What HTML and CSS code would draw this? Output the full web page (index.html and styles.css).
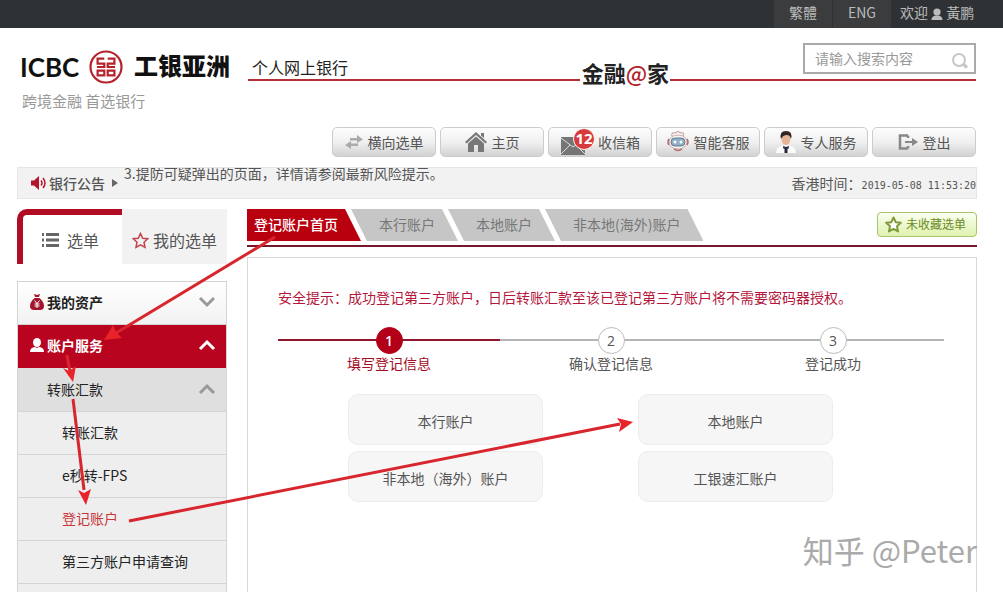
FILE: index.html
```html
<!DOCTYPE html>
<html lang="zh-CN">
<head>
<meta charset="utf-8">
<title>个人网上银行</title>
<link rel="stylesheet" href="styles.css">
</head>
<body>
<nav class="topbar">
  <a class="lang" href="#">繁體</a>
  <a class="lang" href="#">ENG</a>
  <span class="welcome">欢迎
    <svg width="12" height="12" viewBox="0 0 12 12"><circle cx="6" cy="4" r="3.6"/><path d="M0.5 12C0.5 9 3 7.6 6 7.6S11.500 9 11.500 12Z"/></svg>
    黃鹏</span>
</nav>

<header class="header">
  <div class="brand">
    <div class="logo">
      <span class="logo-en">ICBC</span>
      <svg width="34" height="34" viewBox="0 0 34 34" fill="none" stroke="#b5222c">
        <circle cx="17" cy="17" r="15.500" stroke-width="2.200"/>
        <path stroke-width="2.200" d="M15.300 8.600H8.600V13.600H15.300V17H8M18.700 8.600H25.400V13.600H18.700V17H26M15.300 25.400H8.600V20.600H15.300V26.500M18.700 25.400H25.400V20.600H18.700V26.500"/>
      </svg>
      <span class="logo-cn">工银亚洲</span>
    </div>
    <div class="slogan">跨境金融 首选银行</div>
  </div>
  <div class="headline">
    <div class="rule rule-title">个人网上银行</div>
    <div class="wordmark">金融<b>@</b>家</div>
    <form class="rule rule-search">
      <label class="search">
        <input type="text" placeholder="请输入搜索内容" aria-label="请输入搜索内容">
        <svg width="18" height="18" viewBox="0 0 18 18" fill="none" stroke="#c6c6c6"><circle cx="8" cy="8" r="6" stroke-width="2"/><path d="M12.500 12.500L16 15.500" stroke-width="3"/></svg>
      </label>
    </form>
  </div>
</header>

<div class="tools">
  <button class="tool"><svg width="18" height="14" viewBox="0 0 18 14" fill="#aaa"><path d="M5 3H12V0L18 4.500L12 8V5.500H5Z"/><path d="M13 8.500H6V6L0 10L6 14V11H13Z"/></svg>横向选单</button>
  <button class="tool"><svg width="22" height="20" viewBox="0 0 22 20" fill="#777"><path d="M11 0L22 10L20.500 11.500L11 3L1.500 11.500L0 10Z"/><path d="M16 1H19V6L16 3.500Z"/><path d="M3 11.500L11 4.500L19 11.500V20H13V13H9V20H3Z"/></svg>主页</button>
  <button class="tool mail"><svg width="36" height="28" viewBox="0 0 36 28"><path fill="#757575" d="M1 9H25V27H1Z"/><path fill="none" stroke="#ddd" d="M1 10L13 19L25 10M1 26L10 17M25 26L16 17"/><circle cx="24" cy="11" r="10.500" fill="#d93a3c" stroke="#f6f6f6"/><text class="mail-count" x="24" y="16">12</text></svg>收信箱</button>
  <button class="tool"><svg width="22" height="24" viewBox="0 0 22 24" fill="none"><path d="M5 6Q4 2 8 3Q11 0 14 3Q18 2 16 6" stroke="#b98f92"/><ellipse cx="11" cy="12" rx="9" ry="7" fill="#f6f6f6" stroke="#c9a9ab"/><rect x="4" y="8" width="14" height="8" rx="4" fill="#8fb0c6" stroke="#66788a"/><circle cx="8" cy="12" r="1.500" fill="#fff"/><circle cx="14" cy="12" r="1.500" fill="#fff"/><path d="M2 9Q0 12 2 15M20 9Q22 12 20 15M7 19Q11 22 15 19" stroke="#b6686d" stroke-width="1.500"/></svg>智能客服</button>
  <button class="tool"><svg width="20" height="22" viewBox="0 0 20 22"><path fill="#fafafa" d="M0 22Q0 16 6 15L10 14L14 15Q20 16 20 22Z"/><ellipse cx="10" cy="8" rx="4.500" ry="6" fill="#e6b497"/><path fill="#302524" d="M5 8Q3 0 10 0Q17 0 15 8Q14 4 11 4Q7 4 5 8Z"/><path fill="#28263e" d="M7 15L10 16L13 15L12.500 18L11.500 17.500V22H8.500V17.500L7.500 18Z"/></svg>专人服务</button>
  <button class="tool"><svg width="20" height="16" viewBox="0 0 20 16"><path d="M10 1.500H2V14.500H10M10 1.500V4M10 14.500V12" fill="none" stroke="#888" stroke-width="2.500"/><path fill="#888" d="M7 7H14V4L20 8L14 12V9H7Z"/></svg>登出</button>
</div>

<section class="notice">
  <div class="notice-title">
    <svg width="16" height="14" viewBox="0 0 16 14"><path fill="#b3162c" d="M0 4.500H3L8 0V14L3 9.500H0Z"/><path d="M10 4.500Q12 7 10 9.500M12 2Q16 7 12 12" fill="none" stroke="#b3162c" stroke-width="1.500"/></svg>
    银行公告
    <svg class="notice-arrow" width="6" height="8" viewBox="0 0 6 8"><path fill="#666" d="M0 0L6 4L0 8Z"/></svg>
  </div>
  <div class="notice-text">3.提防可疑弹出的页面，详情请参阅最新风险提示。</div>
  <div class="clock">香港时间：<time>2019-05-08 11:53:20</time></div>
</section>

<div class="columns">
  <aside class="sidebar">
    <div class="side-tabs">
      <button class="side-tab active"><svg width="17" height="14" viewBox="0 0 17 14" fill="#666"><path d="M0 0H2V3H0ZM4 0H17V3H4ZM0 5.500H2V8.500H0ZM4 5.500H17V8.500H4ZM0 11H2V14H0ZM4 11H17V14H4Z"/></svg>选单</button>
      <button class="side-tab"><svg width="17" height="17" viewBox="0 0 17 17" fill="none" stroke="#c0444a" stroke-width="1.500"><path d="M8.500 1.500L10.700 6.200L15.800 6.700L12 10.200L13 15.400L8.500 12.900L4 15.400L5 10.200L1.200 6.700L6.300 6.200Z"/></svg>我的选单</button>
    </div>
    <ul class="menu">
      <li><a class="group" href="#"><svg width="14" height="16" viewBox="0 0 14 16"><path fill="#a3142a" d="M4 0L7 1L10 0L9 3H5ZM4.500 4H9.500Q14 8 14 12Q14 16 10 16H4Q0 16 0 12Q0 8 4.500 4Z"/><path d="M4.500 6.500L7 9.500L9.500 6.500M7 9.500V14M4.500 10H9.500M4.500 12H9.500" fill="none" stroke="#fff"/></svg><span>我的资产</span><svg class="chevron" width="18" height="12" viewBox="0 0 18 12"><path d="M2 2L9 9L16 2"/></svg></a></li>
      <li><a class="group open" href="#"><svg width="14" height="14" viewBox="0 0 14 14" fill="#fff"><ellipse cx="7" cy="4.500" rx="4" ry="4.500"/><path d="M0 14Q0 9.500 5 9L7 10L9 9Q14 9.500 14 14Z"/></svg><span>账户服务</span><svg class="chevron" width="18" height="12" viewBox="0 0 18 12"><path d="M2 10L9 3L16 10"/></svg></a></li>
      <li><a class="sub" href="#"><span>转账汇款</span><svg class="chevron" width="18" height="12" viewBox="0 0 18 12"><path d="M2 10L9 3L16 10"/></svg></a></li>
      <li><a class="leaf" href="#">转账汇款</a></li>
      <li><a class="leaf" href="#">e秒转-FPS</a></li>
      <li><a class="leaf current" href="#">登记账户</a></li>
      <li><a class="leaf" href="#">第三方账户申请查询</a></li>
      <li class="rest"></li>
    </ul>
  </aside>

  <main class="main">
    <div class="tabbar">
      <nav class="tabs">
        <a class="tab selected" href="#">登记账户首页</a>
        <a class="tab" href="#">本行账户</a>
        <a class="tab" href="#">本地账户</a>
        <a class="tab" href="#">非本地(海外)账户</a>
      </nav>
      <button class="favorite"><svg width="17" height="17" viewBox="0 0 17 17" fill="#fff" stroke="#7f9c38" stroke-width="2"><path stroke-linejoin="round" d="M8.500 1.500L10.700 6.200L15.800 6.700L12 10.200L13 15.400L8.500 12.900L4 15.400L5 10.200L1.200 6.700L6.300 6.200Z"/></svg>未收藏选单</button>
    </div>
    <section class="panel">
      <p class="tip">安全提示：成功登记第三方账户，日后转账汇款至该已登记第三方账户将不需要密码器授权。</p>
      <ol class="steps">
        <li class="step done"><span class="dot">1</span>填写登记信息</li>
        <li class="step"><span class="dot">2</span>确认登记信息</li>
        <li class="step"><span class="dot">3</span>登记成功</li>
      </ol>
      <div class="choices">
        <button class="choice">本行账户</button>
        <button class="choice">本地账户</button>
        <button class="choice">非本地（海外）账户</button>
        <button class="choice">工银速汇账户</button>
      </div>
    </section>
  </main>
</div>

<svg class="arrows" width="1003" height="592" viewBox="0 0 1003 592" fill="none" stroke="#d8262e" stroke-width="3">
  <path d="M275 237L116 333M67 355L70 372M73 399L84 490M129 521L620 424"/>
  <g fill="#e8232a" stroke="none">
    <path d="M104 340L113 325L116 332L122 338Z"/>
    <path d="M73 382L63 368L69 371L76 366Z"/>
    <path d="M86 505L78 490L84 493L91 489Z"/>
    <path d="M633 422L617 418L621 424L619 432Z"/>
  </g>
</svg>
<div class="watermark">知乎 @Peter</div>
</body>
</html>
```

FILE: styles.css
```css
* { box-sizing: border-box; }
body {
  margin: 0;
  min-height: 100vh;
  display: flex;
  flex-direction: column;
  position: relative;
  overflow: hidden;
  background: #fff;
  color: #555;
  font: 14px/20px "Noto Sans CJK SC", "Noto Sans", sans-serif;
}
a { color: inherit; text-decoration: none; }
button { font: inherit; color: inherit; cursor: pointer; }
ul, ol { list-style: none; margin: 0; padding: 0; }
svg { flex: none; }

.topbar {
  display: flex;
  justify-content: flex-end;
  height: 28px;
  line-height: 25px;
  background: #2f3235;
  color: #bbb;
}
.lang {
  width: 59px;
  text-align: center;
  background: #3a3c3e;
  border-right: 1px solid #2f3235;
}
.welcome { width: 111px; padding-left: 8px; fill: #bbb; white-space: nowrap; }
.welcome svg { vertical-align: -2px; }

.header {
  display: flex;
  height: 99px;
  padding: 0 27px 0 17px;
}
.brand { width: 231px; flex: none; padding: 21px 0 0 3px; white-space: nowrap; }
.logo { display: flex; align-items: center; gap: 10px; height: 36px; color: #111; }
.logo-en { font: 700 26px/36px Lato, sans-serif; width: 59px; }
.logo-cn { font-size: 24px; line-height: 32px; padding: 0 0 4px 1px; font-weight: 900; }
.slogan { color: #999; font-size: 15px; padding: 6px 2px; }
.headline { flex: 1; display: flex; }
.rule { height: 53px; border-bottom: 2px solid #b3303a; }
.rule-title { flex: 331; padding: 29px 0 0 4px; font-size: 16px; color: #222; }
.wordmark {
  flex: none;
  width: 90px;
  padding-top: 28px;
  text-align: center;
  white-space: nowrap;
  font-size: 22px;
  line-height: 32px;
  font-weight: 700;
  color: #222;
}
.wordmark b { color: #b3202c; font-weight: 500; }
.rule-search { flex: 308; display: flex; justify-content: flex-end; padding-top: 15px; }
.search {
  display: flex;
  align-items: center;
  width: 173px;
  height: 31px;
  padding: 0 5px 2px 10px;
  border: 2px solid #aaa;
  background: #fff;
}
.search input { flex: 1; min-width: 0; border: 0; padding: 0; outline: 0; font: inherit; background: none; }
.search input::placeholder { color: #999; }
.search svg { align-self: flex-end; }

.tools { display: flex; justify-content: flex-end; gap: 4px; padding-right: 27px; }
.tool {
  display: flex;
  align-items: center;
  justify-content: center;
  gap: 5px;
  width: 104px;
  height: 30px;
  padding: 0 0 1px;
  border: 1px solid #ccc;
  border-radius: 5px;
  background: linear-gradient(#fdfdfd, #f0f0f0 50%, #d2d2d2);
}
.mail { gap: 2px; }
.mail-count { font: 700 15px "Open Sans", sans-serif; fill: #fff; text-anchor: middle; }

.notice {
  display: flex;
  height: 32px;
  margin: 10px 26px 0 17px;
  border: 1px solid #e6e6e6;
  background: #f2f2f2;
  overflow: hidden;
  white-space: nowrap;
}
.notice-title { display: flex; align-items: center; gap: 2px; width: 106px; padding-left: 13px; font-weight: 500; }
.notice-arrow { margin-left: 5px; }
.notice-text { flex: 1; line-height: 10px; }
.clock { line-height: 30px; }
.clock time { font: 10px "DejaVu Sans Mono", monospace; }

.columns { flex: 1; display: flex; gap: 20px; padding: 10px 26px 0 17px; }
.sidebar { width: 210px; flex: none; display: flex; flex-direction: column; }
.side-tabs { display: flex; height: 55px; margin-bottom: 17px; font-size: 16px; }
.side-tab {
  display: flex;
  align-items: center;
  justify-content: center;
  gap: 4px;
  flex: 1 1 0;
  padding: 7px 0 0;
  border: 0;
  background: #f2f2f2;
  white-space: nowrap;
}
.side-tab.active {
  flex: none;
  width: 105px;
  gap: 8px;
  padding: 1px 4px 0 0;
  border: solid #b00d24;
  border-width: 6px 0 0 6px;
  border-radius: 10px 0 0 0;
  background: #fff;
}
.menu { flex: 1; display: flex; flex-direction: column; border: solid #d4d4d4; border-width: 1px 1px 0; background: #eee; color: #222; }
.menu a { display: flex; align-items: center; height: 43px; padding-bottom: 2px; border-bottom: 1px solid #d4d4d4; }
.menu span { flex: 1; }
.menu .chevron { fill: none; stroke: #999; stroke-width: 3px; }
.menu .group { gap: 3px; padding: 0 10px 2px 12px; font-weight: 700; background: linear-gradient(#fff, #f2f2f2); }
.menu .open { background: #b9041f; color: #fff; border-color: #b9041f; }
.menu .open .chevron { stroke: #fff; }
.menu .sub { height: 44px; padding: 0 10px 2px 29px; background: #dfdfdf; }
.menu .leaf { padding-left: 44px; }
.menu .current { color: #c8373c; }

.main { flex: 1; display: flex; flex-direction: column; min-width: 0; }
.tabbar {
  display: flex;
  justify-content: space-between;
  height: 38px;
  margin-bottom: 10px;
  border-bottom: 2px solid #74182b;
}
.tabs { display: flex; }
.tab {
  height: 32px;
  margin-right: -10px;
  padding: 0 23px 0 28px;
  line-height: 30px;
  color: #777;
  background: #c6c6c6;
  white-space: nowrap;
  clip-path: polygon(0 0, calc(100% - 16px) 0, 100% 100%, 16px 100%);
}
.tab.selected {
  padding-left: 7px;
  color: #fff;
  font-weight: 500;
  background: #b9000f;
  clip-path: polygon(0 0, calc(100% - 16px) 0, 100% 100%, 0 100%);
}
.favorite {
  display: flex;
  align-items: center;
  gap: 4px;
  height: 25px;
  margin-top: 3px;
  padding: 0 10px 1px 7px;
  border: 1px solid #a9c46c;
  border-radius: 4px;
  background: linear-gradient(#fafff0, #dff2ae);
  color: #6b8a24;
  font-size: 12px;
}
.panel { flex: 1; padding: 29px 32px 0 30px; border: solid #d8d8d8; border-width: 1px 1px 0; }
.tip { margin: 0 0 20px; color: #b3163a; }
.steps { display: flex; text-align: center; line-height: 18px; }
.step {
  flex: 1;
  display: flex;
  flex-direction: column;
  align-items: center;
  background: linear-gradient(#b5b5b5, #b5b5b5) 0 12px / 100% 2px no-repeat;
}
.step.done { color: #a30d25; background-image: linear-gradient(#8f1830, #8f1830); }
.dot {
  width: 27px;
  height: 27px;
  border: 1px solid #bbb;
  border-radius: 50%;
  background: #fff;
  font-family: "Open Sans", sans-serif;
  line-height: 25px;
}
.done .dot { border-color: #b30018; background: #b30018; color: #fff; font-weight: 600; }
.choices {
  display: grid;
  grid-template-columns: repeat(2, minmax(0, 195px));
  gap: 6px 95px;
  padding: 22px 0 0 70px;
}
.choice { height: 51px; padding: 2px 0 0; border: 1px solid #ececec; border-radius: 10px; background: #f6f6f6; }

.arrows { position: absolute; left: 0; top: 0; pointer-events: none; }
.watermark {
  position: absolute;
  right: 26px;
  bottom: 22px;
  font-size: 31px;
  line-height: 40px;
  color: #aaa;
  text-shadow: -1px -1px 0 #fff;
  pointer-events: none;
}
```
